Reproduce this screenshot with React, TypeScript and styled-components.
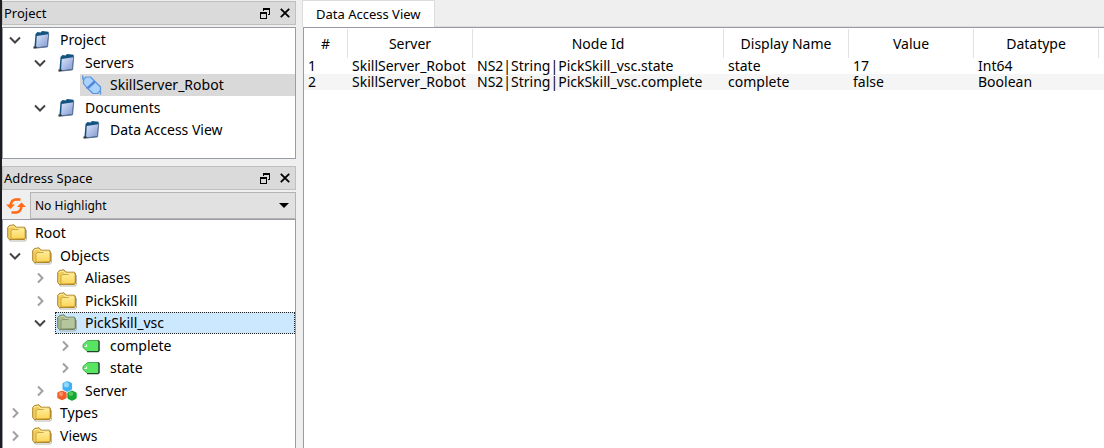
import React from "react";
import styled, { createGlobalStyle } from "styled-components";

const Global = createGlobalStyle`
  * { box-sizing: border-box; }
  html, body { margin: 0; height: 100%; background: #efefef; }
  #root { height: 100%; }
  body, button, select, table {
    font-family: "Noto Sans", "Open Sans", sans-serif;
    font-size: 14px;
    line-height: 16px;
    color: #000;
  }
`;

const Window = styled.div`
  display: flex;
  height: 100vh;
  overflow: hidden;
  border-left: 2px solid #1e1e22;
  background: #efefef;
`;

const Sidebar = styled.aside`
  display: flex;
  flex-direction: column;
  flex: 0 0 294px;
  padding-top: 1px;
`;

const Dock = styled.section<{ $grow?: boolean }>`
  display: flex;
  flex-direction: column;
  flex: ${(p) => (p.$grow ? "1 0 auto" : "0 0 auto")};
  margin-bottom: ${(p) => (p.$grow ? "0" : "7px")};
`;

const TitleBar = styled.header`
  display: flex;
  align-items: center;
  height: 24px;
  padding-left: 1px;
  margin-bottom: 2px;
  border: 1px solid #bfbfbf;
  background: #dadada;
`;

const Title = styled.h2`
  flex: 1;
  margin: 0;
  font-size: 13px;
  font-weight: 400;
`;

const IconButton = styled.button`
  display: grid;
  place-items: center;
  width: 20px;
  height: 20px;
  padding: 0;
  border: 0;
  background: transparent;
`;

const Tree = styled.div<{ $fill?: boolean }>`
  display: grid;
  grid-auto-rows: 22px 23px;
  flex: ${(p) => (p.$fill ? "1 0 auto" : "0 0 auto")};
  align-content: start;
  padding: ${(p) => (p.$fill ? "2px 0 0" : "1px 0 17px")};
  border: 1px solid #989ca6;
  border-bottom-width: ${(p) => (p.$fill ? "0" : "1px")};
  background: #fff;
`;

const TreeRow = styled.div<{ $level: number }>`
  display: flex;
  align-items: stretch;
  padding-left: ${(p) => (p.$level ? p.$level * 25 - 23 : 2)}px;
`;

const Twisty = styled.span`
  display: grid;
  place-items: center;
  flex: 0 0 20px;
  margin-right: 5px;
`;

const Item = styled.span<{ $state?: "inactive" | "selected" }>`
  display: flex;
  align-items: center;
  gap: 8px;
  flex: 1;
  padding-left: 2px;
  white-space: nowrap;
  background: ${(p) =>
    p.$state === "inactive" ? "#d9d9d9" : p.$state === "selected" ? "#cce8ff" : "transparent"};
  outline: ${(p) => (p.$state === "selected" ? "1px dotted #222" : "none")};
  outline-offset: -1px;
  svg { flex: none; }
`;

const Toolbar = styled.div`
  display: flex;
  height: 27px;
`;

const RefreshButton = styled(IconButton)`
  width: 28px;
  height: 27px;
`;

const Combo = styled.div`
  display: flex;
  align-items: center;
  position: relative;
  flex: 1;
  svg { position: absolute; right: 7px; pointer-events: none; }
`;

const Select = styled.select`
  appearance: none;
  width: 100%;
  height: 27px;
  padding: 0 24px 0 4px;
  border: 1px solid #b4b4b4;
  border-radius: 0;
  background: #e1e1e1;
  font-size: 12px;
`;

const Main = styled.main`
  display: flex;
  flex-direction: column;
  flex: 1;
  min-width: 0;
  margin-left: 6px;
`;

const TabBar = styled.div`
  display: flex;
  height: 27px;
  border-bottom: 1px solid #dcdcdc;
`;

const Tab = styled.button`
  height: 27px;
  padding: 0 13px;
  border: 1px solid #dcdcdc;
  border-bottom: 0;
  background: #fff;
  font-size: 13px;
`;

const Sheet = styled.div`
  flex: 1;
  margin-left: 1px;
  padding-top: 1px;
  border-top: 1px solid #989ca6;
  border-left: 1px solid #989ca6;
  background: #fff;
  overflow: hidden;
`;

const Table = styled.table`
  width: 100%;
  table-layout: fixed;
  border-collapse: separate;
  border-spacing: 0;
`;

const Col = styled.col<{ $w?: number }>`
  width: ${(p) => (p.$w ? `${p.$w}px` : "auto")};
`;

const Th = styled.th`
  height: 29px;
  padding: 0;
  border-right: 1px solid #e2e2e2;
  font-weight: 400;
  &:last-child { border-right: 0; }
`;

const Td = styled.td`
  height: 16px;
  padding: 0 0 0 4px;
  white-space: nowrap;
  tr:nth-child(even) > & { background: #f5f5f5; }
`;

const Chevron = ({ open }: { open?: boolean }) => (
  <svg width="12" height="12" viewBox="0 0 12 12" fill="none" strokeWidth="2" stroke={open ? "#444" : "#a0a0a0"}>
    <path d={open ? "M1 3.5L6 8.5L11 3.5" : "M4 1.5L8.5 6L4 10.5"} />
  </svg>
);

const Book = () => (
  <svg width="20" height="20" viewBox="0 0 20 20">
    <path d="M3.5 4L5.5 2L8.5 2.6L10 1L16.5 1.8L16.8 3L15.5 17L4 18L2.5 16Z" fill="#14527f" />
    <path d="M4.8 6L16.2 4.2L15.2 16.3L4 17.2Z" fill="url(#bookFill)" />
    <path d="M16.7 3.5L15.6 16.8L5 18" fill="none" stroke="#5c6c8c" strokeWidth="0.9" />
    <path d="M1.2 16.8L4 15.8L5.2 18.3L1.8 18.8Z" fill="#333b47" />
    <defs>
      <linearGradient id="bookFill" x1="0" y1="0" x2="1" y2="1">
        <stop offset="0" stopColor="#dce5fa" />
        <stop offset="1" stopColor="#829ad2" />
      </linearGradient>
    </defs>
  </svg>
);

const Plug = () => (
  <svg width="20" height="20" viewBox="0 0 20 20" fill="#a9d2fc" stroke="#5b93df" strokeWidth="1.2" strokeLinejoin="round">
    <path d="M0.8 0.5V4L2.5 5M17 15.5L18.5 17V19.5" strokeWidth="1.4" fill="none" />
    <path d="M1.5 8.5V4.5L4 2H8.5L12.5 6L5 13Z" />
    <path d="M13.5 7L18.5 12V15.5L15.5 18.5H11L6 13.8Z" />
    <path d="M4.8 13.5L13 6.2" stroke="#5185d2" strokeWidth="1.6" />
  </svg>
);

const Folder = ({ tinted }: { tinted?: boolean }) => (
  <svg width="20" height="18" viewBox="0 0 20 18">
    <path d="M2 15L3 17H18.5L19.5 15V6" fill="none" stroke="#8a8a78" strokeWidth="1" opacity="0.6" />
    <path
      d="M0.7 13.5V3.5L2.5 1.5L7 0.8L9 3.2H17.5L18.5 5V14L17.5 15.5H2.5Z"
      fill={tinted ? "#a9b68b" : "#f0cc5a"}
      stroke={tinted ? "#71835f" : "#ad842a"}
    />
    <path
      d="M4 15V6.5L6 5.5H11L12.5 4.5H18V14.5Z"
      fill={tinted ? "#b6c69c" : "url(#folderFill)"}
      stroke={tinted ? "#7e906c" : "#c59b32"}
      strokeWidth="0.8"
    />
    <path d="M2 4L3 2.7L6.5 2.2L8 4.3H17" fill="none" stroke={tinted ? "#c6d2b4" : "#fff0a6"} />
    <defs>
      <linearGradient id="folderFill" x1="0" y1="0" x2="0" y2="1">
        <stop offset="0" stopColor="#ffed9b" />
        <stop offset="1" stopColor="#fbd455" />
      </linearGradient>
    </defs>
  </svg>
);

const Tag = () => (
  <svg width="20" height="16" viewBox="0 0 20 16">
    <path d="M5.5 2.5H16L17 3.5V12.5L16 13.5H5.5L1 9.5V6.5Z" fill="#58e662" stroke="#4aa555" />
    <path d="M16 2.5L17 3.5V12.7L16 13.6H5" fill="none" stroke="#20462a" strokeWidth="1.3" />
    <path d="M4.5 6.5V8.5H2.5" fill="none" stroke="#fff" strokeWidth="1.2" />
  </svg>
);

const Cubes = () => (
  <svg width="20" height="20" viewBox="0 0 20 20" strokeLinejoin="round" strokeWidth="3">
    <path d="M7 3.2L10.3 1.7L13.6 3.2V7.6L10.3 9.3L7 7.6Z" fill="#3fb2f4" stroke="#3fb2f4" />
    <circle cx="9.4" cy="3.8" r="2.6" fill="#a5e2fe" opacity="0.8" />
    <path d="M1.8 12.5L5 11.2L8.2 12.5V16.2L5 17.7L1.8 16.2Z" fill="#f0602c" stroke="#f0602c" />
    <circle cx="4" cy="13" r="2.2" fill="#ff9b72" opacity="0.8" />
    <path d="M11.8 12.6L15 11L18.2 12.6V16.6L15 18.3L11.8 16.6Z" fill="#16a832" stroke="#16a832" />
    <circle cx="14" cy="12.8" r="2.3" fill="#5bd268" opacity="0.8" />
  </svg>
);

const Refresh = () => (
  <svg width="20" height="18" viewBox="0 0 20 18" fill="none" stroke="#ff6a13" strokeWidth="2.6">
    <path d="M14.5 2.5H9.5Q5 3 4.5 9" />
    <path d="M0 7.5H9L4.5 12Z" fill="#ff6a13" stroke="none" />
    <path d="M5.5 15.5H10.5Q15 15 15.5 9" />
    <path d="M11 10H20L15.5 5.5Z" fill="#ff6a13" stroke="none" />
  </svg>
);

const Float = () => (
  <svg width="10" height="11" viewBox="0 0 10 11" fill="#000" shapeRendering="crispEdges">
    <path d="M3 0H10V7H8V6H9V2H4V3H3Z" />
    <path d="M0 4H7V11H0ZM1 6V10H6V6Z" fillRule="evenodd" />
  </svg>
);

const Close = () => (
  <svg width="10" height="10" viewBox="0 0 10 10" stroke="#000" strokeWidth="1.8">
    <path d="M0.8 0.8L9.2 9.2M9.2 0.8L0.8 9.2" />
  </svg>
);

const icons = {
  book: <Book />,
  plug: <Plug />,
  folder: <Folder />,
  folderTinted: <Folder tinted />,
  tag: <Tag />,
  cubes: <Cubes />,
};

type Node = {
  label: string;
  level: number;
  icon: keyof typeof icons;
  open?: boolean;
  state?: "inactive" | "selected";
};

const project: Node[] = [
  { label: "Project", level: 1, icon: "book", open: true },
  { label: "Servers", level: 2, icon: "book", open: true },
  { label: "SkillServer_Robot", level: 3, icon: "plug", state: "inactive" },
  { label: "Documents", level: 2, icon: "book", open: true },
  { label: "Data Access View", level: 3, icon: "book" },
];

const addressSpace: Node[] = [
  { label: "Root", level: 0, icon: "folder" },
  { label: "Objects", level: 1, icon: "folder", open: true },
  { label: "Aliases", level: 2, icon: "folder", open: false },
  { label: "PickSkill", level: 2, icon: "folder", open: false },
  { label: "PickSkill_vsc", level: 2, icon: "folderTinted", open: true, state: "selected" },
  { label: "complete", level: 3, icon: "tag", open: false },
  { label: "state", level: 3, icon: "tag", open: false },
  { label: "Server", level: 2, icon: "cubes", open: false },
  { label: "Types", level: 1, icon: "folder", open: false },
  { label: "Views", level: 1, icon: "folder", open: false },
];

const columns = [
  { name: "#", width: 44 },
  { name: "Server", width: 125 },
  { name: "Node Id", width: 251 },
  { name: "Display Name", width: 125 },
  { name: "Value", width: 125 },
  { name: "Datatype", width: 125 },
  { name: "" },
];

const rows = [
  ["1", "SkillServer_Robot", "NS2|String|PickSkill_vsc.state", "state", "17", "Int64", ""],
  ["2", "SkillServer_Robot", "NS2|String|PickSkill_vsc.complete", "complete", "false", "Boolean", ""],
];

const DockTitle = ({ text }: { text: string }) => (
  <TitleBar>
    <Title>{text}</Title>
    <IconButton aria-label="Float"><Float /></IconButton>
    <IconButton aria-label="Close"><Close /></IconButton>
  </TitleBar>
);

const TreeView = ({ nodes, label, fill }: { nodes: Node[]; label: string; fill?: boolean }) => (
  <Tree role="tree" aria-label={label} $fill={fill}>
    {nodes.map((n) => (
      <TreeRow
        key={n.label}
        role="treeitem"
        aria-level={n.level + 1}
        aria-expanded={n.open}
        aria-selected={!!n.state}
        $level={n.level}
      >
        {n.level > 0 && <Twisty>{n.open !== undefined && <Chevron open={n.open} />}</Twisty>}
        <Item $state={n.state}>
          {icons[n.icon]}
          {n.label}
        </Item>
      </TreeRow>
    ))}
  </Tree>
);

export default function App() {
  return (
    <Window>
      <Global />
      <Sidebar>
        <Dock>
          <DockTitle text="Project" />
          <TreeView nodes={project} label="Project" />
        </Dock>
        <Dock $grow>
          <DockTitle text="Address Space" />
          <Toolbar>
            <RefreshButton aria-label="Refresh"><Refresh /></RefreshButton>
            <Combo>
              <Select aria-label="Highlight">
                <option>No Highlight</option>
              </Select>
              <svg width="10" height="5" viewBox="0 0 10 5"><path d="M0 0H10L5 5Z" /></svg>
            </Combo>
          </Toolbar>
          <TreeView nodes={addressSpace} label="Address Space" fill />
        </Dock>
      </Sidebar>
      <Main>
        <TabBar role="tablist">
          <Tab role="tab" aria-selected>Data Access View</Tab>
        </TabBar>
        <Sheet>
          <Table>
            <colgroup>
              {columns.map((c) => <Col key={c.name} $w={c.width} />)}
            </colgroup>
            <thead>
              <tr>{columns.map((c) => <Th key={c.name} scope="col">{c.name}</Th>)}</tr>
            </thead>
            <tbody>
              {rows.map((r) => (
                <tr key={r[0]}>{r.map((v, i) => <Td key={i}>{v}</Td>)}</tr>
              ))}
            </tbody>
          </Table>
        </Sheet>
      </Main>
    </Window>
  );
}
